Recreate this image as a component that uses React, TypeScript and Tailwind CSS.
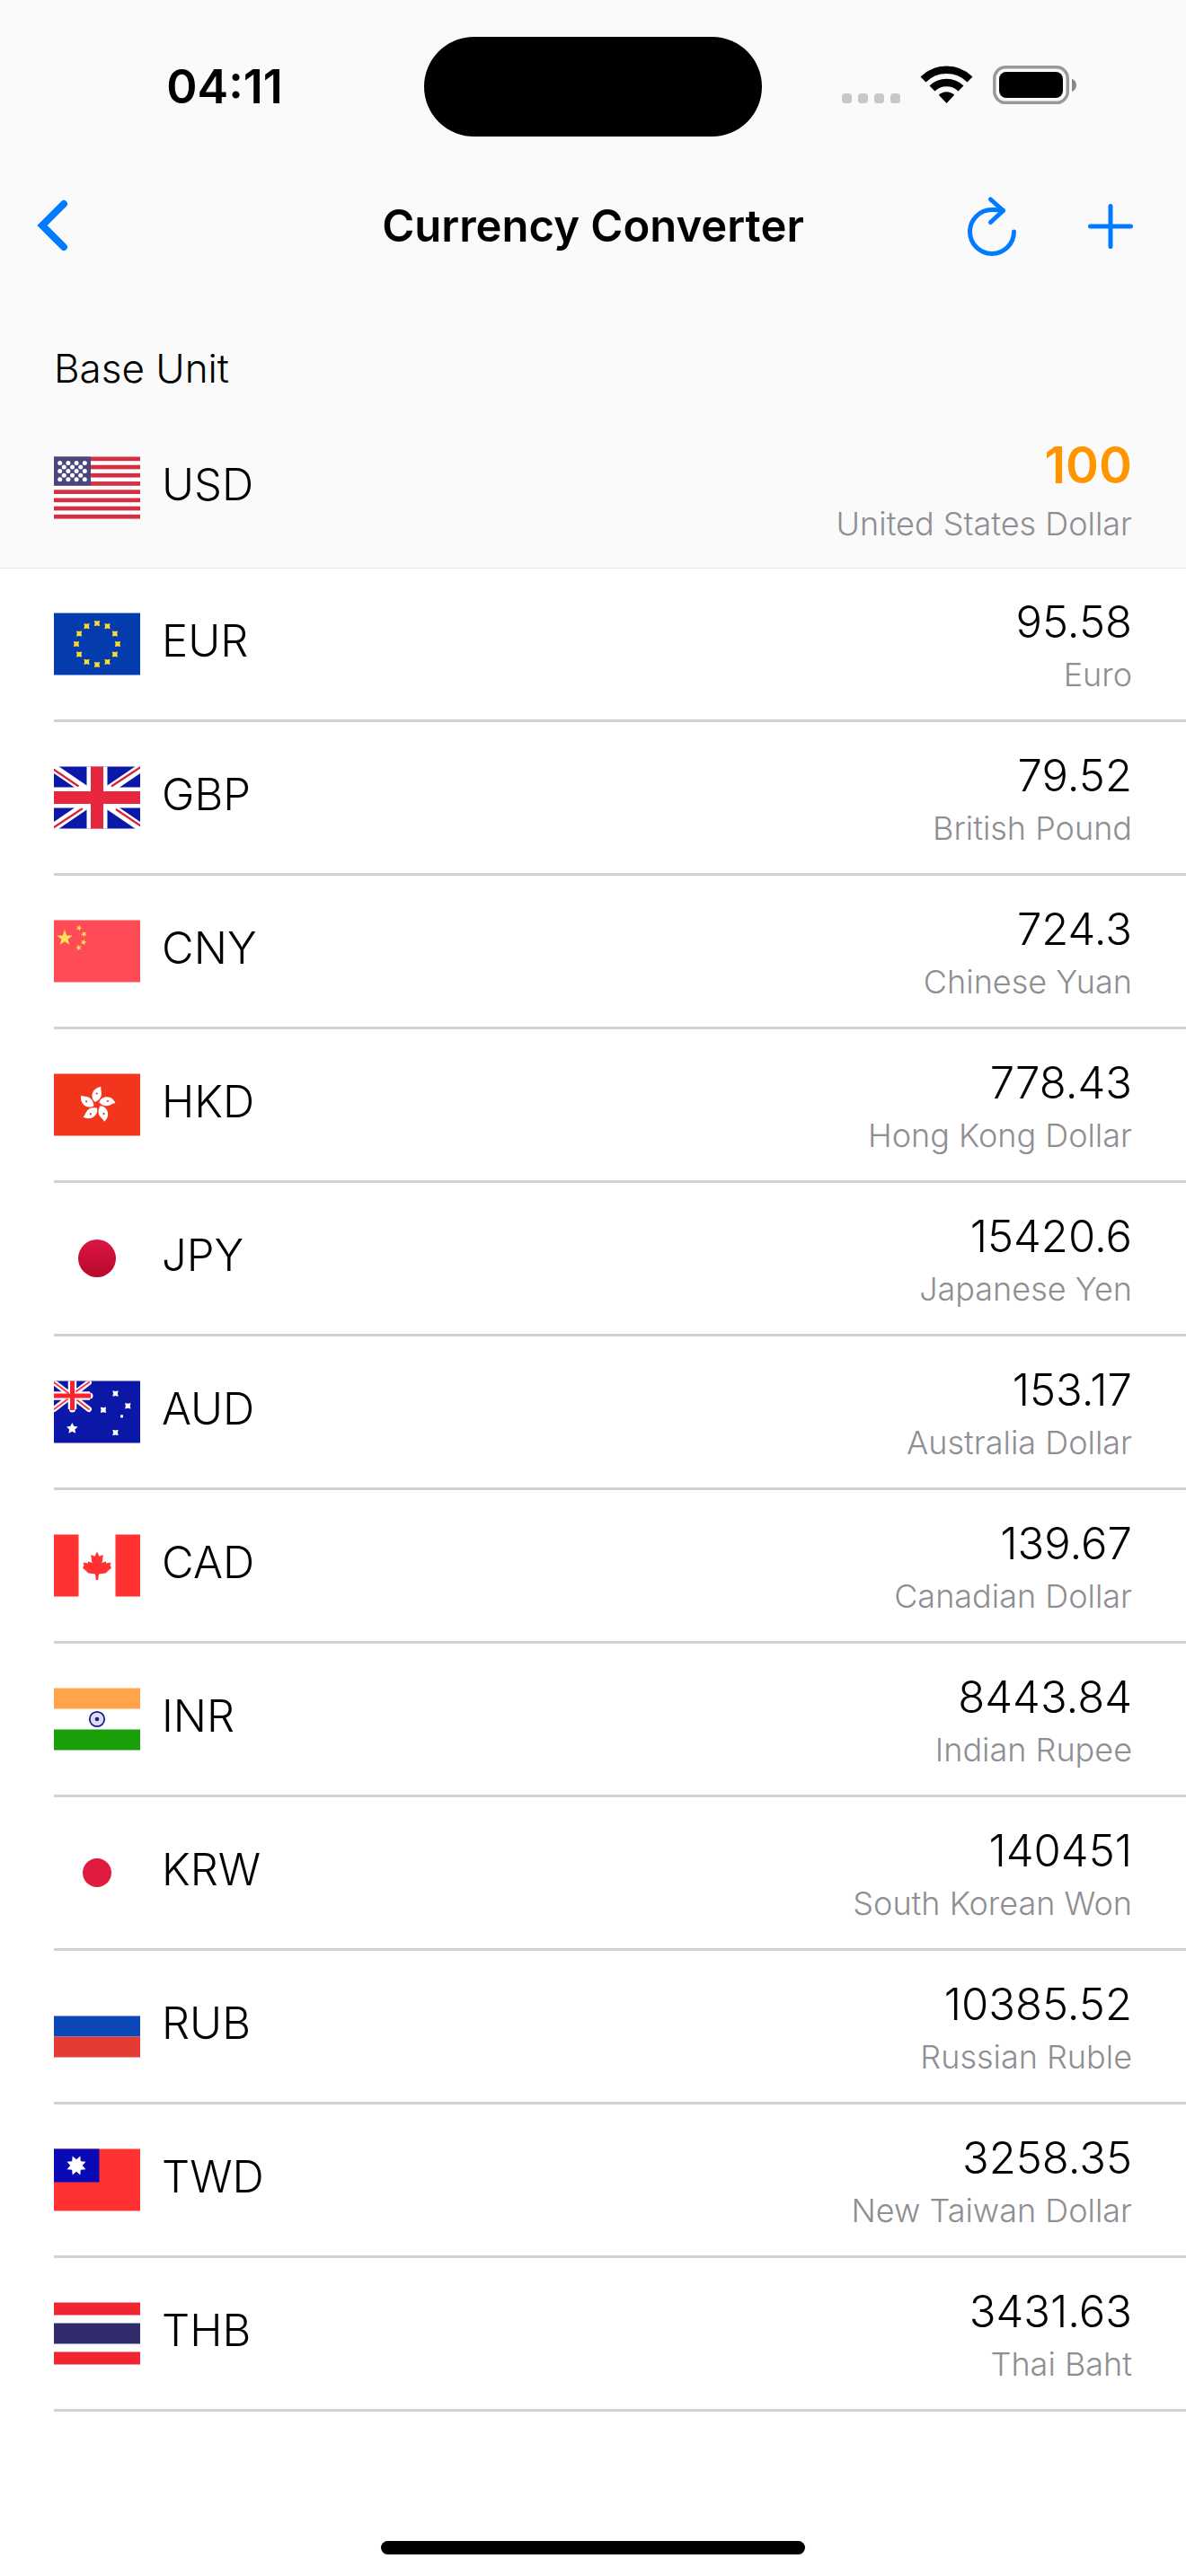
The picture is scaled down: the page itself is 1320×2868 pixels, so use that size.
import React from "react";

function star(cx: number, cy: number, r: number, points = 5, inner = 0.4, rot = 0) {
  const out: string[] = [];
  for (let i = 0; i < points * 2; i++) {
    const a = (Math.PI * i) / points - Math.PI / 2 + (rot * Math.PI) / 180;
    const rad = i % 2 ? r * inner : r;
    out.push(`${(cx + rad * Math.cos(a)).toFixed(2)},${(cy + rad * Math.sin(a)).toFixed(2)}`);
  }
  return out.join(" ");
}

function Flag({ label, children }: { label: string; children: React.ReactNode }) {
  return (
    <svg role="img" aria-label={label} viewBox="0 0 96 70" className="h-[70px] w-24 shrink-0">
      {children}
    </svg>
  );
}

function FlagUS() {
  return (
    <Flag label="United States flag">
      <rect width="96" height="70" fill="#fff" />
      {[0, 1, 2, 3, 4, 5, 6, 7].map((i) => (
        <rect key={i} y={0.5 + i * 9.2} width="96" height="4.7" fill="#d43044" />
      ))}
      <rect y="0.5" width="41" height="32" fill="#48467c" />
      {[0, 1, 2, 3, 4].map((r) =>
        (r % 2 ? [11.2, 20.5, 29.7] : [6.7, 15.9, 25.1, 34.3]).map((x) => (
          <circle key={`${r}-${x}`} cx={x} cy={7.4 + r * 4.6} r="2.5" fill="#fff" />
        )),
      )}
    </Flag>
  );
}

function FlagEU() {
  return (
    <Flag label="European Union flag">
      <rect y="0.5" width="96" height="69" fill="#043cae" />
      {Array.from({ length: 12 }, (_, i) => {
        const a = (i * Math.PI) / 6;
        return (
          <polygon
            key={i}
            points={star(48 + 23 * Math.cos(a), 35 + 23 * Math.sin(a), 4.4, 4, 0.55, 45)}
            fill="#ffda2c"
          />
        );
      })}
    </Flag>
  );
}

function FlagGB() {
  return (
    <Flag label="United Kingdom flag">
      <rect y="0.5" width="96" height="69" fill="#0a17a7" />
      <path d="M-2 1L98 69M98 1L-2 69" stroke="#fff" strokeWidth="9.5" />
      <path d="M-2 2.5L27.5 22.5M98 0L64 22.5M-2 69.5L32 47M69 48L98 67.5" stroke="#db1f35" strokeWidth="2.2" />
      <path d="M48 0.5V69.5M0 35H96" stroke="#fff" strokeWidth="23" />
      <path d="M48 0.5V69.5M0 35H96" stroke="#e6273e" strokeWidth="14" />
    </Flag>
  );
}

function FlagCN() {
  return (
    <Flag label="China flag">
      <rect y="0.5" width="96" height="69" fill="#ff4b55" />
      <g fill="#ffe15a">
        <polygon points={star(12, 20.5, 9.4)} />
        <polygon points={star(28, 9.2, 3.6, 5, 0.4, 20)} />
        <polygon points={star(33.5, 16, 3.6, 5, 0.4, 50)} />
        <polygon points={star(33, 25, 3.6, 5, 0.4, 15)} />
        <polygon points={star(27.5, 31, 3.6, 5, 0.4, 55)} />
      </g>
    </Flag>
  );
}

function FlagHK() {
  return (
    <Flag label="Hong Kong flag">
      <rect y="0.5" width="96" height="69" fill="#f1361d" />
      {[0, 72, 144, 216, 288].map((a) => (
        <g key={a} transform={`rotate(${a} 48 35)`}>
          <path d="M46 32C41.5 29 41.5 22 45 18.5C47.5 16 50.5 15 52.5 15C51.5 18 54 21 52.5 25.5C51.5 29 48.5 30.5 46 32Z" fill="#fff" />
          <circle cx="47.8" cy="22.5" r="1.1" fill="#f1361d" />
        </g>
      ))}
    </Flag>
  );
}

function FlagJP() {
  return (
    <Flag label="Japan flag">
      <defs>
        <linearGradient id="sun" x1="0" y1="0" x2="0" y2="1">
          <stop offset="0" stopColor="#dc1444" />
          <stop offset="1" stopColor="#b80a2c" />
        </linearGradient>
      </defs>
      <rect width="96" height="70" fill="#fff" />
      <circle cx="48" cy="35" r="21" fill="url(#sun)" />
    </Flag>
  );
}

function FlagAU() {
  return (
    <Flag label="Australia flag">
      <rect y="0.5" width="96" height="69" fill="#0a17a7" />
      <clipPath id="au">
        <rect y="0.5" width="44" height="36" />
      </clipPath>
      <g clipPath="url(#au)" strokeLinecap="round">
        <path d="M0 2L39 32M39 2L0 32" stroke="#fff" strokeWidth="6" />
        <path d="M20.5 -3V32M-3 17H40" stroke="#fff" strokeWidth="9.5" strokeLinecap="butt" />
        <path d="M20.5 30V32M38 17H40" stroke="#fff" strokeWidth="7" />
        <path d="M0 2L16 14M39 2L25 12M0 32L15 21M39 32L26 22" stroke="#ff2e3b" strokeWidth="1.8" />
        <path d="M20.5 -3V33M-3 17H41" stroke="#ff1f2f" strokeWidth="5" strokeLinecap="butt" />
      </g>
      <g fill="#fff">
        <polygon points={star(20.3, 53.5, 6.6, 5, 0.5)} />
        <polygon points={star(68.5, 14.5, 4.5, 4, 0.55, 45)} />
        <polygon points={star(82.3, 28.3, 4.5, 4, 0.55, 45)} />
        <polygon points={star(55, 32.8, 4.5, 4, 0.55, 45)} />
        <polygon points={star(68.5, 58, 4.5, 4, 0.55, 45)} />
        <rect x="74" y="38.3" width="3" height="3" />
      </g>
    </Flag>
  );
}

function FlagCA() {
  return (
    <Flag label="Canada flag">
      <rect width="96" height="70" fill="#fff" />
      <path d="M0 0.5H27.5V69.5H0ZM68.5 0.5H96V69.5H68.5Z" fill="#ff3131" />
      <path
        d="M48 19.5L50.5 24.7L54.8 23L53.5 32L57.5 30.5L58.5 32.5L63.5 31.5L62.5 35L64 37.5L57.5 43.5L50 44.5L49.2 51H46.8L46 44.5L38.5 43.5L32 37.5L33.5 35L32.5 31.5L37.5 32.5L38.5 30.5L42.5 32L41.2 23L45.5 24.7Z"
        fill="#ff3131"
      />
    </Flag>
  );
}

function FlagIN() {
  return (
    <Flag label="India flag">
      <rect width="96" height="70" fill="#fff" />
      <rect y="0.5" width="96" height="23" fill="#ffa44a" />
      <rect y="46.5" width="96" height="23" fill="#1a9f0b" />
      <circle cx="48" cy="35" r="8.2" fill="#dcdcf0" stroke="#181a93" strokeWidth="1.8" />
      <circle cx="48" cy="35" r="2.3" fill="#181a93" />
    </Flag>
  );
}

function FlagKR() {
  return (
    <Flag label="South Korea flag">
      <rect width="96" height="70" fill="#fff" />
      <circle cx="48" cy="35" r="16" fill="#e01b41" />
    </Flag>
  );
}

function FlagRU() {
  return (
    <Flag label="Russia flag">
      <rect width="96" height="70" fill="#fff" />
      <rect y="23.5" width="96" height="23" fill="#0c47b7" />
      <rect y="46.5" width="96" height="23" fill="#e53b35" />
    </Flag>
  );
}

function FlagTW() {
  return (
    <Flag label="Taiwan flag">
      <rect y="0.5" width="96" height="69" fill="#ff3131" />
      <rect y="0.5" width="50.5" height="37" fill="#0909b5" />
      <polygon points={star(25, 19, 11.3, 8, 0.6, 22.5)} fill="#fff" />
    </Flag>
  );
}

function FlagTH() {
  return (
    <Flag label="Thailand flag">
      <rect width="96" height="70" fill="#fff" />
      <rect y="0.5" width="96" height="14" fill="#f12532" />
      <rect y="23.5" width="96" height="23" fill="#322b6c" />
      <rect y="55.5" width="96" height="14" fill="#f12532" />
    </Flag>
  );
}

const rates = [
  { code: "EUR", value: "95.58", name: "Euro", flag: <FlagEU /> },
  { code: "GBP", value: "79.52", name: "British Pound", flag: <FlagGB /> },
  { code: "CNY", value: "724.3", name: "Chinese Yuan", flag: <FlagCN /> },
  { code: "HKD", value: "778.43", name: "Hong Kong Dollar", flag: <FlagHK /> },
  { code: "JPY", value: "15420.6", name: "Japanese Yen", flag: <FlagJP /> },
  { code: "AUD", value: "153.17", name: "Australia Dollar", flag: <FlagAU /> },
  { code: "CAD", value: "139.67", name: "Canadian Dollar", flag: <FlagCA /> },
  { code: "INR", value: "8443.84", name: "Indian Rupee", flag: <FlagIN /> },
  { code: "KRW", value: "140451", name: "South Korean Won", flag: <FlagKR /> },
  { code: "RUB", value: "10385.52", name: "Russian Ruble", flag: <FlagRU /> },
  { code: "TWD", value: "3258.35", name: "New Taiwan Dollar", flag: <FlagTW /> },
  { code: "THB", value: "3431.63", name: "Thai Baht", flag: <FlagTH /> },
];

function StatusBar() {
  return (
    <div className="grid h-[193px] grid-cols-[1fr_376px_1fr] items-center">
      <div className="pl-7 text-center text-[52px] leading-[60px] font-semibold">04:11</div>
      <div className="h-[111px] rounded-full bg-black" />
      <div className="flex justify-center pr-8 pb-[3px]">
        <svg viewBox="0 0 262 44" className="h-11 w-[262px]" aria-label="Status" role="img">
          <g fill="#c8c8c8">
            <rect x="0" y="31" width="11" height="11" rx="3.5" />
            <rect x="18" y="31" width="11" height="11" rx="3.5" />
            <rect x="36" y="31" width="11" height="11" rx="3.5" />
            <rect x="54" y="31" width="11" height="11" rx="3.5" />
          </g>
          <g fill="none" stroke="#000" strokeWidth="8.5">
            <path d="M90.500 15.500A37 37 0 0 1 142.500 15.500" />
            <path d="M100.500 25.500A23 23 0 0 1 132.500 25.500" />
          </g>
          <path d="M116.500 42L107.800 32.800A12.500 12.500 0 0 1 125.200 32.800Z" />
          <rect x="169.800" y="1.800" width="81.500" height="39.500" rx="12.500" fill="none" stroke="#999" strokeWidth="3.500" />
          <rect x="175" y="7" width="71" height="29" rx="8" />
          <path d="M256 14.500Q261 17 261 21.700Q261 26.500 256 29Z" fill="#888" />
        </svg>
      </div>
    </div>
  );
}

function NavBar() {
  return (
    <div className="grid h-[118px] grid-cols-[1fr_auto_1fr] items-center">
      <button type="button" aria-label="Back" className="ml-9 size-[60px]">
        <svg viewBox="0 0 60 60" fill="none" stroke="#007aff" strokeWidth="8" strokeLinecap="round">
          <path d="M35 5L11 29L35 53" />
        </svg>
      </button>
      <h1 className="text-[49px] leading-[60px] font-semibold">Currency Converter</h1>
      <div className="mr-[54px] flex justify-end gap-[72px]">
        <button type="button" aria-label="Refresh" className="size-[60px]">
          <svg viewBox="0 0 60 60" fill="none" stroke="#007aff" strokeWidth="5" strokeLinecap="round" strokeLinejoin="round" className="overflow-visible">
            <path d="M54.500 36A24.500 24.500 0 1 1 30 11.500Q37 11.500 42.500 12.500" />
            <path d="M28.500 0L42.500 12.500L28.500 25.500" />
          </svg>
        </button>
        <button type="button" aria-label="Add currency" className="size-[60px]">
          <svg viewBox="0 0 60 60" fill="none" stroke="#007aff" strokeWidth="5" strokeLinecap="round">
            <path d="M30 7.500V52.500M7.500 30H52.500" />
          </svg>
        </button>
      </div>
    </div>
  );
}

export default function App() {
  return (
    <div className="flex min-h-screen flex-col bg-white font-['Inter',sans-serif] font-light text-black">
      <header className="border-b border-[#e6e6e6] bg-[#fafafa]">
        <StatusBar />
        <NavBar />
        <section className="px-[60px] pt-[69px]">
          <label htmlFor="amount" className="block text-[44px] leading-[60px]">
            Base Unit
          </label>
          <div className="flex h-[192px] items-center gap-6 pt-3.5">
            <FlagUS />
            <span className="pb-1.5 text-[49px] leading-[60px]">USD</span>
            <div className="flex min-w-0 grow flex-col pt-4 text-right">
              <input
                id="amount"
                defaultValue="100"
                inputMode="decimal"
                className="h-[65px] w-full bg-transparent text-right text-[56px] leading-[65px] font-semibold text-[#ff9500] outline-none"
              />
              <span className="text-[36px] leading-[65px] text-[#8e8e93]">United States Dollar</span>
            </div>
          </div>
        </section>
      </header>
      <ul className="pl-[60px]">
        {rates.map((r) => (
          <li key={r.code} className="flex h-[171px] items-center gap-6 border-b-3 border-[#d1d1d6] pr-[60px]">
            {r.flag}
            <span className="pb-1.5 text-[49px] leading-[60px]">{r.code}</span>
            <div className="flex grow flex-col pt-2.5 text-right">
              <span className="text-[49px] leading-[58px]">{r.value}</span>
              <span className="text-[36px] leading-[58px] text-[#8e8e93]">{r.name}</span>
            </div>
          </li>
        ))}
      </ul>
      <div className="mx-auto mt-auto mb-6 h-[15px] w-[472px] rounded-full bg-black" />
    </div>
  );
}
